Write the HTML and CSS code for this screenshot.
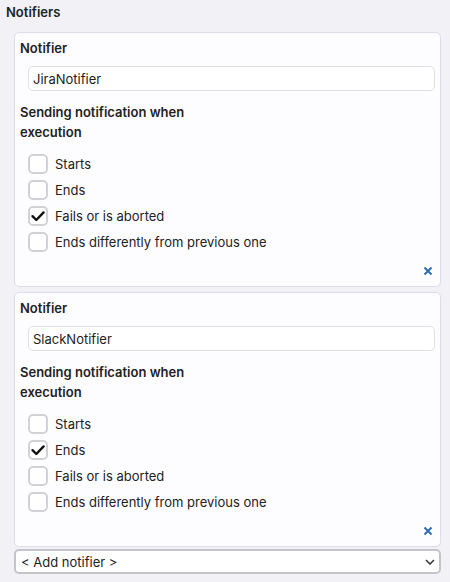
FILE: index.html
```html
<!DOCTYPE html>
<html>
<head>
<meta charset="utf-8">
<link rel="stylesheet" href="styles.css">
</head>
<body>
<div class="page">
  <div class="heading">Notifiers</div>
  <div class="list">
    <div class="card">
      <div class="title">Notifier</div>
      <input class="name" type="text" value="JiraNotifier">
      <div class="label">Sending notification when execution</div>
      <div class="checks">
        <label class="row"><span class="box"></span><span>Starts</span></label>
        <label class="row"><span class="box"></span><span>Ends</span></label>
        <label class="row"><span class="box checked"><svg viewBox="0 0 20 20" width="20" height="20"><path d="M4.5 10.2 L8.3 14 L15.6 6.4" fill="none" stroke="#111" stroke-width="2.4" stroke-linecap="round" stroke-linejoin="round"/></svg></span><span>Fails or is aborted</span></label>
        <label class="row"><span class="box"></span><span>Ends differently from previous one</span></label>
      </div>
      <div class="actions"><span class="remove"><svg viewBox="0 0 10 10" width="10" height="10"><path d="M1.5 1.5 L8.5 8.5 M8.5 1.5 L1.5 8.5" stroke="#2e6db0" stroke-width="2" fill="none"/></svg></span></div>
    </div>
    <div class="card">
      <div class="title">Notifier</div>
      <input class="name" type="text" value="SlackNotifier">
      <div class="label">Sending notification when execution</div>
      <div class="checks">
        <label class="row"><span class="box"></span><span>Starts</span></label>
        <label class="row"><span class="box checked"><svg viewBox="0 0 20 20" width="20" height="20"><path d="M4.5 10.2 L8.3 14 L15.6 6.4" fill="none" stroke="#111" stroke-width="2.4" stroke-linecap="round" stroke-linejoin="round"/></svg></span><span>Ends</span></label>
        <label class="row"><span class="box"></span><span>Fails or is aborted</span></label>
        <label class="row"><span class="box"></span><span>Ends differently from previous one</span></label>
      </div>
      <div class="actions"><span class="remove"><svg viewBox="0 0 10 10" width="10" height="10"><path d="M1.5 1.5 L8.5 8.5 M8.5 1.5 L1.5 8.5" stroke="#2e6db0" stroke-width="2" fill="none"/></svg></span></div>
    </div>
    <div class="select">
      <span>&lt; Add notifier &gt;</span>
      <svg viewBox="0 0 10 6" width="10" height="6"><path d="M1 1 L5 5 L9 1" fill="none" stroke="#333" stroke-width="1.5"/></svg>
    </div>
  </div>
</div>
</body>
</html>
```

FILE: styles.css
```css
html, body {
  margin: 0;
  padding: 0;
  background: #f1f1f6;
  font-family: Inter, "Noto Sans", sans-serif;
  font-size: 13px;
  color: #222;
}
.page {
  padding: 4px 9px 0 6px;
}
.heading {
  font-weight: 600;
  line-height: 16px;
  color: #222;
}
.list {
  margin: 12px 0 0 8px;
  display: flex;
  flex-direction: column;
  gap: 5px;
}
.card {
  background: #fdfdff;
  border: 1px solid #dddde9;
  border-radius: 5px;
  padding: 7px 5px 6px 5px;
  display: flex;
  flex-direction: column;
}
.title {
  font-weight: 600;
  line-height: 16px;
}
.name {
  margin: 10px 0 0 8px;
  height: 25px;
  box-sizing: border-box;
  border: 1px solid #e0e0ea;
  border-radius: 5px;
  background: #fff;
  font-family: inherit;
  font-size: 13px;
  color: #222;
  padding: 0 4px;
  outline: none;
}
.label {
  margin-top: 11px;
  font-weight: 600;
  line-height: 20px;
  width: 185px;
}
.checks {
  margin-top: 9px;
  display: flex;
  flex-direction: column;
}
.row {
  display: flex;
  align-items: center;
  gap: 7px;
  height: 26px;
  padding-left: 8px;
  line-height: 16px;
}
.box {
  width: 20px;
  height: 20px;
  box-sizing: border-box;
  border: 2px solid #d2d2d6;
  border-radius: 5px;
  background: #fff;
  display: flex;
  align-items: center;
  justify-content: center;
}
.box svg {
  flex: none;
  margin: -2px;
}
.actions {
  margin-top: 7px;
  display: flex;
  justify-content: flex-end;
  height: 18px;
  align-items: center;
  padding-right: 2px;
}
.remove {
  display: flex;
}
.select {
  margin-top: -3px;
  height: 25px;
  box-sizing: border-box;
  border: 2px solid #c4c4ca;
  border-radius: 5px;
  background: #fff;
  display: flex;
  align-items: center;
  justify-content: space-between;
  padding: 0 4px 0 5px;
  color: #222;
}
```
